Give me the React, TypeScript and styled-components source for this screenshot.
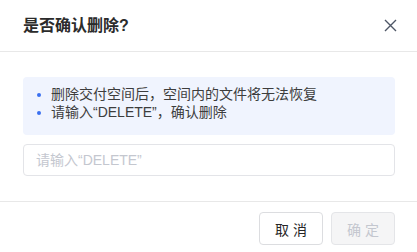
import styled, { createGlobalStyle } from 'styled-components';

const GlobalStyle = createGlobalStyle`
  html, body {
    margin: 0;
    padding: 0;
    background: #fff;
  }
  body {
    font-family: "Liberation Sans", "Noto Sans CJK SC", sans-serif;
    color: #333;
  }
`;

const tips = ['删除交付空间后，空间内的文件将无法恢复', '请输入“DELETE”，确认删除'];

function App() {
  return (
    <>
      <GlobalStyle />
      <Dialog>
        <Header>
          <Title>是否确认删除?</Title>
          <CloseButton aria-label="关闭">
            <svg width="13" height="13" viewBox="0 0 13 13">
              <path d="M1 1 L12 12 M12 1 L1 12" stroke="#4e5666" strokeWidth="1.4" fill="none" />
            </svg>
          </CloseButton>
        </Header>
        <Body>
          <TipBox>
            {tips.map(t => (
              <TipItem key={t}>{t}</TipItem>
            ))}
          </TipBox>
          <Input placeholder="请输入“DELETE”" />
        </Body>
        <Footer>
          <Button>取 消</Button>
          <Button disabled>确 定</Button>
        </Footer>
      </Dialog>
    </>
  );
}

const Dialog = styled.div`
  width: 417px;
  height: 252px;
  background: #fff;
  display: flex;
  flex-direction: column;
`;

const Header = styled.div`
  height: 52px;
  box-sizing: border-box;
  display: flex;
  align-items: center;
  justify-content: space-between;
  padding: 0 19px 0 23px;
  border-bottom: 1px solid #e8e8e8;
`;

const Title = styled.h2`
  margin: 0;
  font-size: 16px;
  font-weight: 700;
  color: #2b2b2b;
  line-height: 22px;
`;

const CloseButton = styled.button`
  border: none;
  background: none;
  padding: 0;
  width: 16px;
  height: 16px;
  display: flex;
  align-items: center;
  justify-content: center;
  cursor: pointer;
`;

const Body = styled.div`
  padding: 25px 22px 25px 23px;
  display: flex;
  flex-direction: column;
  gap: 9px;
`;

const TipBox = styled.ul`
  margin: 0;
  padding: 8px 0 14px 28px;
  list-style: none;
  background: #f0f4fe;
  border-radius: 4px;
`;

const TipItem = styled.li`
  position: relative;
  font-size: 14px;
  line-height: 18px;
  color: #3d3d3d;

  &::before {
    content: '';
    position: absolute;
    left: -14px;
    top: 8px;
    width: 4px;
    height: 4px;
    border-radius: 50%;
    background: #3a6ff0;
  }
`;

const Input = styled.input`
  height: 32px;
  box-sizing: border-box;
  border: 1px solid #e3e4e8;
  border-radius: 4px;
  padding: 0 12px;
  font-family: inherit;
  font-size: 14px;
  color: #333;
  outline: none;

  &::placeholder {
    color: #c4c7cf;
  }
`;

const Footer = styled.div`
  border-top: 1px solid #e8e8e8;
  display: flex;
  justify-content: flex-end;
  gap: 8px;
  padding: 10px 22px 0 0;
`;

const Button = styled.button`
  width: 64px;
  height: 33px;
  box-sizing: border-box;
  border: 1px solid #dcdde0;
  border-radius: 4px;
  background: #fff;
  font-family: inherit;
  font-size: 14px;
  color: #262626;
  cursor: pointer;

  &:disabled {
    background: #f5f5f6;
    border-color: #e4e5e8;
    color: #c4c7cf;
    cursor: not-allowed;
  }
`;

export default App;
